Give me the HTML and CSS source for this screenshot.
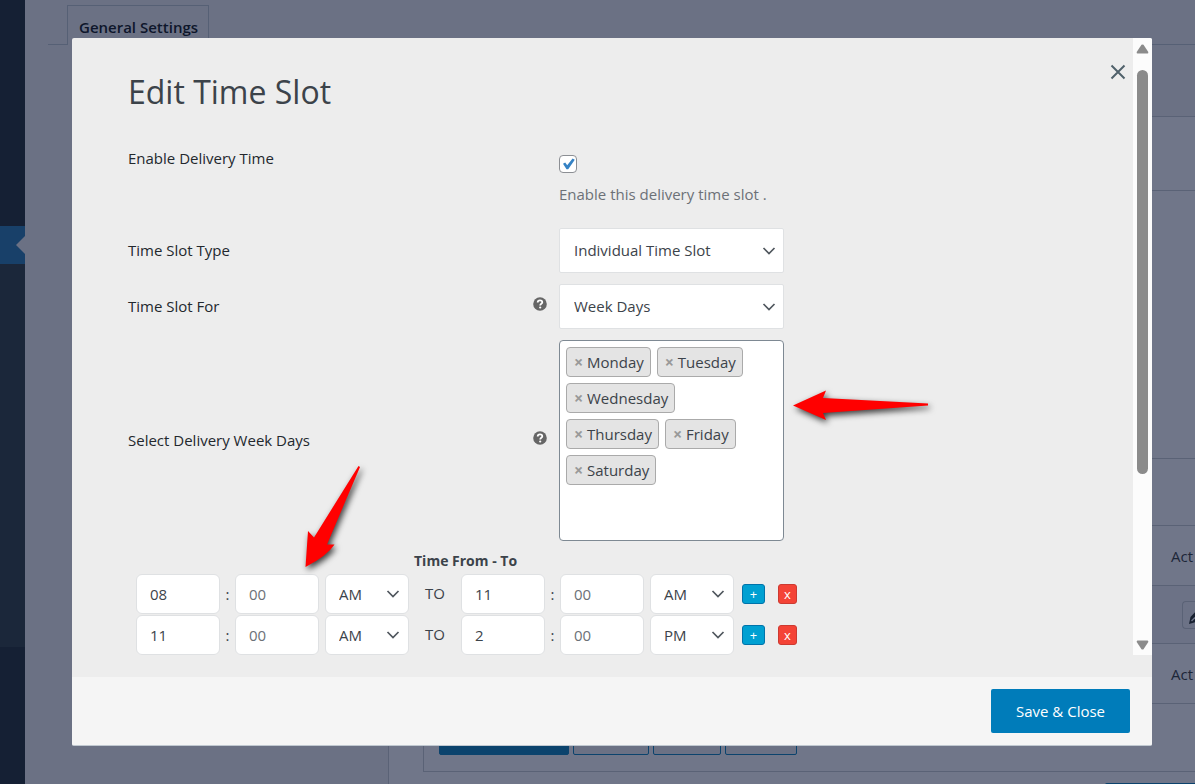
FILE: index.html
```html
<!DOCTYPE html>
<html lang="en">
<head>
<meta charset="utf-8">
<title>Edit Time Slot</title>
<link rel="stylesheet" href="styles.css">
</head>
<body>
<div class="page">
  <nav class="sidebar" aria-label="Main menu">
    <div class="menu-block menu-block-top"></div>
    <div class="menu-current"></div>
    <div class="menu-sub"></div>
  </nav>
  <main class="main">
    <div class="tabs">
      <span class="tabs-line tabs-line-start"></span>
      <a class="tab" href="#general">General Settings</a>
      <span class="tabs-line tabs-line-end"></span>
    </div>
    <section class="panel">
      <div class="panel-head"></div>
      <div class="panel-body">
        <div class="slots">
          <div class="slots-row slots-toolbar"></div>
          <div class="slots-row slots-head"><span>Act</span></div>
          <div class="slots-row slots-item">
            <button class="edit" type="button" aria-label="Edit slot"><svg width="20" height="20" viewBox="0 0 20 20"><path d="M0 15l1.500-7L9 0l6 6L7 13z" fill="#172131"/><path d="M2.500 12L6 8.500" stroke="#70768a" stroke-width="1.500"/></svg></button>
          </div>
          <div class="slots-row slots-foot"><span>Act</span></div>
          <div class="slots-actions">
            <button class="act act-main" type="button" aria-label="Add time slot"></button>
            <button class="act act-second" type="button" aria-label="Enable"></button>
            <button class="act act-third" type="button" aria-label="Disable"></button>
            <button class="act act-fourth" type="button" aria-label="Delete"></button>
          </div>
        </div>
        <button class="save-page" type="button" aria-label="Save changes"></button>
      </div>
    </section>
  </main>
</div>

<div class="overlay">
  <form class="modal" role="dialog" aria-labelledby="dialog-title">
    <div class="modal-view">
      <div class="modal-content">
        <header class="modal-head">
          <h1 class="title" id="dialog-title">Edit Time Slot</h1>
          <button class="close" type="button" aria-label="Close"><svg width="16" height="16" viewBox="0 0 16 16"><path d="M1.500 1.500l13 13M14.500 1.500l-13 13" stroke="#50616b" stroke-width="2" fill="none"/></svg></button>
        </header>
        <div class="field field-enable">
          <label class="field-label" for="enable">Enable Delivery Time</label>
          <div class="field-value">
            <span class="check">
              <input class="check-input" id="enable" type="checkbox" checked>
              <svg class="check-mark" width="18" height="18" viewBox="0 0 18 18"><path d="M4 8.800L6.200 7.500 8.200 10.300 13.600 3.500 15.800 4.800 9.200 14.300 7.500 14.300z" fill="#3582c4"/></svg>
            </span>
            <p class="hint">Enable this delivery time slot .</p>
          </div>
        </div>
        <div class="field">
          <label class="field-label" for="type">Time Slot Type</label>
          <div class="picker">
            <select class="control picker-large" id="type"><option>Individual Time Slot</option></select>
            <svg class="chevron" width="14" height="10" viewBox="0 0 14 10"><path d="M1.500 2L7 7.500 12.500 2" stroke="#50575e" stroke-width="1.700" fill="none"/></svg>
          </div>
        </div>
        <div class="field">
          <label class="field-label" for="for">Time Slot For</label>
          <svg class="help" width="14" height="14" viewBox="0 0 14 14"><circle cx="7" cy="7" r="6.800" fill="#666"/><path d="M4.700 5.400C4.700 2.700 9.300 2.800 9.300 5.200 9.300 6.800 7.200 6.700 7.200 8.400" stroke="#fff" stroke-width="1.800" fill="none"/><circle cx="7.200" cy="10.500" r="1.100" fill="#fff"/></svg>
          <div class="picker">
            <select class="control picker-large" id="for"><option>Week Days</option></select>
            <svg class="chevron" width="14" height="10" viewBox="0 0 14 10"><path d="M1.500 2L7 7.500 12.500 2" stroke="#50575e" stroke-width="1.700" fill="none"/></svg>
          </div>
        </div>
        <div class="field">
          <span class="field-label" id="days-label">Select Delivery Week Days</span>
          <svg class="help" width="14" height="14" viewBox="0 0 14 14"><circle cx="7" cy="7" r="6.800" fill="#666"/><path d="M4.700 5.400C4.700 2.700 9.300 2.800 9.300 5.200 9.300 6.800 7.200 6.700 7.200 8.400" stroke="#fff" stroke-width="1.800" fill="none"/><circle cx="7.200" cy="10.500" r="1.100" fill="#fff"/></svg>
          <ul class="days" aria-labelledby="days-label">
            <li class="day"><button class="remove" type="button" aria-label="Remove Monday">×</button>Monday</li>
            <li class="day"><button class="remove" type="button" aria-label="Remove Tuesday">×</button>Tuesday</li>
            <li class="day"><button class="remove" type="button" aria-label="Remove Wednesday">×</button>Wednesday</li>
            <li class="day"><button class="remove" type="button" aria-label="Remove Thursday">×</button>Thursday</li>
            <li class="day"><button class="remove" type="button" aria-label="Remove Friday">×</button>Friday</li>
            <li class="day"><button class="remove" type="button" aria-label="Remove Saturday">×</button>Saturday</li>
          </ul>
        </div>
        <fieldset class="times">
          <legend class="times-title">Time From - To</legend>
          <div class="time-row">
            <input class="control time" type="text" value="08" aria-label="From hour">
            <span class="colon">:</span>
            <input class="control time" type="text" placeholder="00" aria-label="From minute">
            <div class="picker picker-time">
              <select class="control time" aria-label="From period"><option>AM</option><option>PM</option></select>
              <svg class="chevron" width="14" height="10" viewBox="0 0 14 10"><path d="M1.500 2L7 7.500 12.500 2" stroke="#50575e" stroke-width="1.700" fill="none"/></svg>
            </div>
            <span class="to">TO</span>
            <input class="control time" type="text" value="11" aria-label="To hour">
            <span class="colon">:</span>
            <input class="control time" type="text" placeholder="00" aria-label="To minute">
            <div class="picker picker-time">
              <select class="control time" aria-label="To period"><option>AM</option><option>PM</option></select>
              <svg class="chevron" width="14" height="10" viewBox="0 0 14 10"><path d="M1.500 2L7 7.500 12.500 2" stroke="#50575e" stroke-width="1.700" fill="none"/></svg>
            </div>
            <button class="mini mini-add" type="button" aria-label="Add row">+</button>
            <button class="mini mini-delete" type="button" aria-label="Delete row">x</button>
          </div>
          <div class="time-row">
            <input class="control time" type="text" value="11" aria-label="From hour">
            <span class="colon">:</span>
            <input class="control time" type="text" placeholder="00" aria-label="From minute">
            <div class="picker picker-time">
              <select class="control time" aria-label="From period"><option>AM</option><option>PM</option></select>
              <svg class="chevron" width="14" height="10" viewBox="0 0 14 10"><path d="M1.500 2L7 7.500 12.500 2" stroke="#50575e" stroke-width="1.700" fill="none"/></svg>
            </div>
            <span class="to">TO</span>
            <input class="control time" type="text" value="2" aria-label="To hour">
            <span class="colon">:</span>
            <input class="control time" type="text" placeholder="00" aria-label="To minute">
            <div class="picker picker-time">
              <select class="control time" aria-label="To period"><option>AM</option><option selected>PM</option></select>
              <svg class="chevron" width="14" height="10" viewBox="0 0 14 10"><path d="M1.500 2L7 7.500 12.500 2" stroke="#50575e" stroke-width="1.700" fill="none"/></svg>
            </div>
            <button class="mini mini-add" type="button" aria-label="Add row">+</button>
            <button class="mini mini-delete" type="button" aria-label="Delete row">x</button>
          </div>
        </fieldset>
      </div>
      <div class="scrollbar" aria-hidden="true">
        <svg width="13" height="10" viewBox="0 0 13 10"><path d="M5.500 .8Q6.500 0 7.500 .8L12.300 8Q12.500 9.500 11.500 9.500H1.500Q.5 9.500 .7 8z" fill="#8b8b8b"/></svg>
        <div class="track"><div class="thumb"></div></div>
        <svg width="13" height="10" viewBox="0 0 13 10"><path d="M5.500 9.200Q6.500 10 7.500 9.200L12.300 2Q12.500 .5 11.500 .5H1.500Q.5 .5 .7 2z" fill="#8b8b8b"/></svg>
      </div>
    </div>
    <footer class="modal-foot">
      <button class="save" type="button">Save &amp; Close</button>
    </footer>
  </form>
</div>
<svg class="arrow arrow-days" width="150" height="50" viewBox="0 0 150 50"><path d="M5 22.500L38 7.500 35 15 140 20.500V22.500L35 30 38 37z" fill="#f00"/></svg>
<svg class="arrow arrow-time" width="75" height="120" viewBox="0 0 75 120"><path d="M5.500 107L8 71 14 77.500 58.500 6 60 7 27 84.500H34.500Q27 96 5.500 107z" fill="#f00"/></svg>
</body>
</html>
```
FILE: styles.css
```css
* { box-sizing: border-box; }
body {
  margin: 0;
  height: 100vh;
  overflow: hidden;
  font: 15px/20px "Open Sans", "Noto Sans", sans-serif;
  color: #3c434a;
}
button, input, select { font: inherit; color: inherit; margin: 0; padding: 0; }

.page { display: grid; grid-template-columns: 25px 1fr; height: 100vh; background: #6b7184; }
.sidebar { background: #152034; }
.menu-block-top { height: 226px; }
.menu-current { height: 38px; display: flex; justify-content: flex-end; align-items: center; background: #184069; }
.menu-current::after { content: ""; border: 9px solid transparent; border-left: 0; border-right-color: #6b7184; }
.menu-sub { height: 383px; background: #1b273a; }

.main { min-width: 0; overflow: hidden; padding: 5px 0 0 23px; }
.tabs { display: flex; align-items: flex-end; height: 40px; }
.tabs-line { border-bottom: 1px solid #566075; }
.tabs-line-start { width: 19px; }
.tabs-line-end { flex: 1; }
.tab {
  height: 40px;
  padding: 11px 10px 0 11px;
  border: 1px solid #566075;
  border-bottom: 0;
  font-weight: 600;
  color: #0e162b;
  text-decoration: none;
}
.panel { margin: 71px 0 0 340px; height: 680px; border: 1px solid #5a6276; border-right: 0; background: #707689; }
.panel-head { height: 74px; border-bottom: 1px solid #5a6276; }
.panel-body { padding-left: 34px; }
.slots { border-left: 1px solid #5a6276; border-bottom: 1px solid #5a6276; color: #1d2638; }
.slots-row { display: flex; justify-content: flex-end; align-items: center; height: 60px; border-bottom: 1px solid #5a6276; }
.slots-row span { width: 24px; }
.slots-toolbar { height: 335px; background: linear-gradient(#5a6276, #5a6276) 0 267px / 100% 1px no-repeat; }
.slots-item { height: 58px; background: #6c7286; }
.edit { width: 13px; height: 28px; padding: 7px 0 0 6px; overflow: hidden; border: 1px solid #5a6276; border-right: 0; border-radius: 4px 0 0 4px; background: none; }
.slots-actions { display: flex; align-items: flex-end; gap: 4px; height: 67px; padding: 0 0 16px 15px; }
.act { height: 30px; border: 1px solid #0b436d; border-radius: 2px; background: #6b7184; }
.act-main { width: 130px; background: #0b436d; }
.act-second { width: 76px; }
.act-third { width: 68px; }
.act-fourth { width: 72px; }
.save-page { display: block; width: 90px; height: 30px; margin: 11px 0 0 auto; border: 0; border-radius: 2px 0 0 2px; background: #0b436d; }

.overlay { position: fixed; inset: 0; display: flex; padding: 38px 43px 38px 72px; }
.modal { flex: 1; min-width: 0; display: flex; flex-direction: column; background: #ededed; border-radius: 2px; border-bottom: 1px solid #c0c8d0; overflow: hidden; }
.modal-view { flex: 1; min-height: 0; display: flex; margin-bottom: 22px; }
.modal-content { flex: 1; min-width: 0; overflow: hidden; padding: 26px 7px 0 56px; }
.modal-head { display: flex; justify-content: space-between; align-items: flex-start; height: 84px; }
.title { margin: 4px 0 0; font-size: 32px; line-height: 48px; font-weight: 400; }
.close { display: flex; padding: 0; border: 0; background: none; }

.field { display: grid; grid-template-columns: 405px 26px 1fr; align-items: center; margin-bottom: 11px; }
.field > .picker, .field-value, .days { grid-column: 3; }
.field-label { padding-bottom: 2px; color: #23282d; }
.field-enable { align-items: start; height: 69px; }
.field-value { padding-top: 7px; }
.check { display: grid; width: 18px; height: 18px; }
.check-input, .check-mark { grid-area: 1 / 1; }
.check-input { appearance: none; width: 18px; height: 18px; border: 1px solid #8c8f94; border-radius: 4px; background: #fff; }
.check-mark { z-index: 1; pointer-events: none; }
.hint { margin: 11px 0 0; color: #6c7177; }
.help { margin-top: -5px; }

.picker { display: grid; align-items: center; justify-items: end; width: 225px; }
.picker .control, .chevron { grid-area: 1 / 1; }
.chevron { z-index: 1; margin-right: 8px; pointer-events: none; }
.control { border: 1px solid #dfe1e3; background: #fff; color: #3c434a; }
select.control { appearance: none; }
.picker-large { width: 225px; height: 45px; padding: 0 14px 2px; border-radius: 2px; }
.control::placeholder { color: #6c7177; opacity: 1; }

.days { display: flex; flex-wrap: wrap; align-content: flex-start; gap: 6px; width: 225px; height: 201px; margin: 0; padding: 6px 14px 6px 6px; list-style: none; border: 1px solid #7e8993; border-radius: 4px; background: #fff; }
.day { display: flex; align-items: center; height: 30px; padding: 0 6px 0 7px; border: 1px solid #aaa; border-radius: 4px; background: #e4e4e4; }
.remove { width: 13px; border: 0; background: none; color: #999; text-align: left; font-size: 16px; font-weight: 700; }

.times { margin: 0; padding: 0 0 0 8px; border: 0; min-width: 0; }
.times-title { padding: 0; margin-left: 278px; height: 22px; font-size: 14px; line-height: 18px; font-weight: 700; }
.time-row { display: flex; align-items: center; height: 40px; }
.time { width: 84px; height: 40px; padding: 0 13px 1px; border-radius: 6px; }
.time-row + .time-row { margin-top: 1px; }
.picker-time { width: 84px; margin-left: 6px; }
.picker-time .chevron { margin-right: 9px; }
.colon { width: 15px; text-align: center; }
.to { width: 52px; padding-bottom: 2px; text-align: center; }
.mini { height: 20px; border: 1px solid; border-radius: 3px; color: #fff; font-size: 13px; line-height: 16px; text-align: center; }
.mini-add { width: 23px; margin-left: 8px; border-color: #0073aa; background: #00a0d2; }
.mini-delete { width: 19px; margin-left: 13px; border-color: #cc3a31; background: #f44336; }

.scrollbar { display: flex; flex-direction: column; align-items: center; width: 19px; padding: 6px 0 5px; background: #fcfcfc; }
.track { flex: 1; width: 11px; padding: 16px 0; }
.thumb { height: 73%; border-radius: 6px; background: #8b8b8b; }
.modal-foot { display: flex; justify-content: flex-end; align-items: center; height: 68px; padding-right: 22px; background: #f5f5f5; }
.save { width: 139px; height: 44px; border: 0; border-radius: 2px; background: #007cba; color: #fff; }

.arrow { position: fixed; filter: drop-shadow(2px 3px 3px rgba(0, 0, 0, .75)); pointer-events: none; }
.arrow-days { left: 788px; top: 383px; }
.arrow-time { left: 300px; top: 460px; }
```
